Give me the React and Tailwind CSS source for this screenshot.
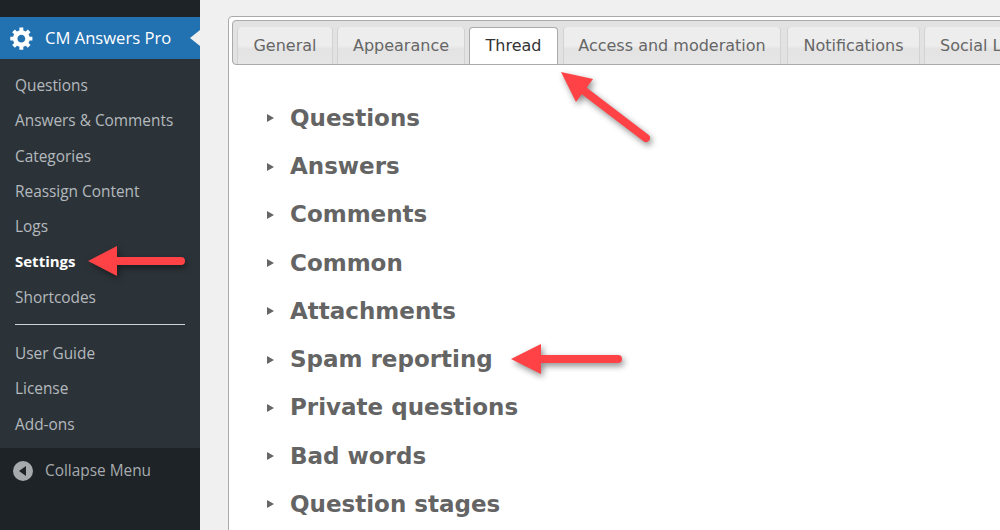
import React from "react";

const seg = '[font-family:"Open_Sans","Noto_Sans",sans-serif]';

function Gear() {
  return (
    <svg width="26" height="26" viewBox="0 0 20 20" className="shrink-0 -ml-[2px] -mr-[2px]">
      <path fill="#fff" fillRule="evenodd" d="M18 12h-2.18c-.17.7-.44 1.35-.81 1.93l1.54 1.54-2.1 2.1-1.54-1.54c-.58.36-1.23.63-1.91.79V19H8v-2.18c-.68-.16-1.33-.43-1.91-.79l-1.54 1.54-2.12-2.12 1.54-1.54c-.36-.58-.63-1.23-.79-1.91H1V9.03h2.17c.16-.7.44-1.35.8-1.94L2.43 5.55l2.1-2.1 1.54 1.54c.58-.37 1.24-.64 1.93-.81V2h3v2.18c.68.16 1.33.43 1.91.79l1.54-1.54 2.12 2.12-1.54 1.54c.36.59.64 1.24.8 1.94H18V12zm-8.5 1.5c1.66 0 3-1.34 3-3s-1.34-3-3-3-3 1.34-3 3 1.34 3 3 3z" />
    </svg>
  );
}

function MenuItem({ children, active }) {
  return (
    <div className={`h-[35.3px] flex items-center pl-[15px] text-[15.4px] ${active ? "text-white font-bold" : "text-[#b4b9be]"}`}>
      <span className={active ? "text-[15px] -translate-y-px" : ""}>{children}</span>
    </div>
  );
}

function Tab({ children, active, className }) {
  return (
    <div
      className={
        (active
          ? "h-[38px] pb-px bg-white border border-b-0 border-[#aaa] rounded-t-[4px] flex items-center justify-center text-[#333] relative z-10 shrink-0 -mb-px "
          : "h-[37px] rounded-t-[4px] flex items-center justify-center text-[#666] bg-[linear-gradient(#ededed_0%,#ededed_50%,#e3e3e3_60%,#e6e6e6_100%)] border-l border-r border-[#d2d2d2] shrink-0 ") + className
      }
    >
      {children}
    </div>
  );
}

const rows = ["Questions", "Answers", "Comments", "Common", "Attachments", "Spam reporting", "Private questions", "Bad words", "Question stages"];

export default function App() {
  return (
    <div className={`relative w-[1000px] h-[530px] overflow-hidden flex bg-[#f0f0f0]`}>
      <aside className={`w-[200px] h-full shrink-0 flex flex-col bg-[#1d2327] ${seg}`}>
        <div className="h-[17px]" />
        <div className="relative h-[42px] bg-[#2271b1] flex items-center pl-[11px] text-white text-[16.6px] gap-[12px]">
          <Gear />
          <span>CM Answers Pro</span>
          <div className="absolute right-0 top-[13px] w-0 h-0 border-y-[8px] border-y-transparent border-r-[10px] border-r-[#f0f0f0]" />
        </div>
        <div className="h-[389px] bg-[#2c3338] pt-[8.9px]">
          <MenuItem>Questions</MenuItem>
          <MenuItem>Answers &amp; Comments</MenuItem>
          <MenuItem>Categories</MenuItem>
          <MenuItem>Reassign Content</MenuItem>
          <MenuItem>Logs</MenuItem>
          <MenuItem active>Settings</MenuItem>
          <MenuItem>Shortcodes</MenuItem>
          <div className="mx-[15px] mt-[9px] mb-[11px] h-px bg-[#d0d2d4]" />
          <MenuItem>User Guide</MenuItem>
          <MenuItem>License</MenuItem>
          <MenuItem>Add-ons</MenuItem>
        </div>
        <div className="flex items-center h-[45px] pl-[13px] gap-[12px] text-[15.4px] text-[#a7aaad]">
          <span className="w-[20px] h-[20px] rounded-full bg-[#a7aaad] flex items-center justify-center">
            <span className="w-0 h-0 border-y-[5px] border-y-transparent border-r-[7px] border-r-[#1d2327] mr-[2px]" />
          </span>
          <span>Collapse Menu</span>
        </div>
      </aside>

      <main className="flex-1 pl-[28px] pt-[16px] min-w-0">
        <div className="w-[900px] h-[600px] bg-white border border-[#aaa] rounded-[4px] p-[3px] [font-family:'DejaVu_Sans',Verdana,sans-serif]">
          <div className="h-[45px] flex items-end pl-[4px] bg-[#e2e2e2] border border-[#aaa] rounded-[4px] overflow-hidden text-[16px] w-[900px]">
            <Tab className="w-[96px]">General</Tab>
            <Tab className="w-[128px] ml-[4px]">Appearance</Tab>
            <Tab active className="w-[89px] ml-[4px]">Thread</Tab>
            <Tab className="w-[218px] ml-[5px]">Access and moderation</Tab>
            <Tab className="w-[133px] ml-[6px]">Notifications</Tab>
            <Tab className="w-[140px] ml-[4px] !justify-start pl-[15px]">Social Login</Tab>
          </div>
          <div className="pt-[29.15px] pl-[35px]">
            {rows.map((r) => (
              <div key={r} className="h-[48.25px] flex items-center gap-[16px] text-[23px] font-bold text-[#646464] leading-none">
                <span className="w-0 h-0 border-y-[4px] border-y-transparent border-l-[7px] border-l-[#666] shrink-0" />
                <span>{r}</span>
              </div>
            ))}
          </div>
        </div>
      </main>

      <svg className="absolute inset-0 pointer-events-none drop-shadow-[2px_3px_3px_rgba(0,0,0,0.45)]" width="1000" height="530">
        <g fill="#ff4245" stroke="#ff4245" strokeLinecap="round">
          <path d="M88 261 L117 246 L117 276 Z" stroke="none" />
          <line x1="115" y1="261" x2="181" y2="261" strokeWidth="8" />
          <path d="M511 359 L541 344 L541 374 Z" stroke="none" />
          <line x1="539" y1="359" x2="618" y2="359" strokeWidth="8" />
          <path d="M561 72 L593 79 L576 102 Z" stroke="none" />
          <line x1="583" y1="90" x2="646" y2="138" strokeWidth="8" />
        </g>
      </svg>
    </div>
  );
}
